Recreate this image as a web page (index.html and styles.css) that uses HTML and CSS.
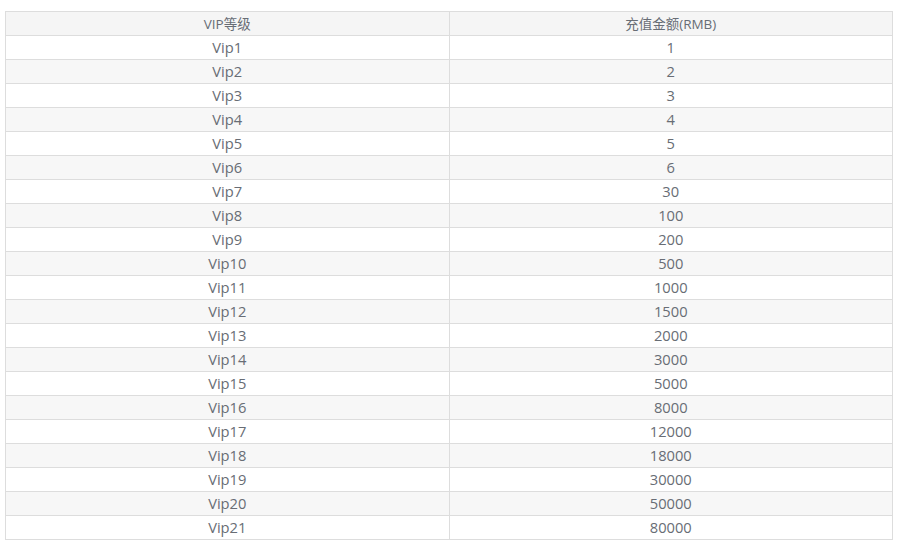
FILE: index.html
```html
<!DOCTYPE html>
<html>
<head>
<meta charset="utf-8">
<link rel="stylesheet" href="styles.css">
</head>
<body>
<div class="wrap">
<table class="vip">
<thead>
<tr><th>VIP等级</th><th>充值金额(RMB)</th></tr>
</thead>
<tbody>
<tr><td>Vip1</td><td>1</td></tr>
<tr><td>Vip2</td><td>2</td></tr>
<tr><td>Vip3</td><td>3</td></tr>
<tr><td>Vip4</td><td>4</td></tr>
<tr><td>Vip5</td><td>5</td></tr>
<tr><td>Vip6</td><td>6</td></tr>
<tr><td>Vip7</td><td>30</td></tr>
<tr><td>Vip8</td><td>100</td></tr>
<tr><td>Vip9</td><td>200</td></tr>
<tr><td>Vip10</td><td>500</td></tr>
<tr><td>Vip11</td><td>1000</td></tr>
<tr><td>Vip12</td><td>1500</td></tr>
<tr><td>Vip13</td><td>2000</td></tr>
<tr><td>Vip14</td><td>3000</td></tr>
<tr><td>Vip15</td><td>5000</td></tr>
<tr><td>Vip16</td><td>8000</td></tr>
<tr><td>Vip17</td><td>12000</td></tr>
<tr><td>Vip18</td><td>18000</td></tr>
<tr><td>Vip19</td><td>30000</td></tr>
<tr><td>Vip20</td><td>50000</td></tr>
<tr><td>Vip21</td><td>80000</td></tr>
</tbody>
</table>
</div>
</body>
</html>
```
FILE: styles.css
```css
html, body {
  margin: 0;
  padding: 0;
  background: #fff;
}
.wrap {
  padding: 11px 0 0 5px;
}
.vip {
  border-collapse: collapse;
  width: 888px;
  table-layout: fixed;
  font-family: "Open Sans", "Noto Sans CJK SC", sans-serif;
  color: #686d75;
}
.vip th, .vip td {
  border: 1px solid #ddd;
  height: 23px;
  padding: 0;
  text-align: center;
  vertical-align: middle;
  line-height: 22px;
}
.vip th {
  background: #f5f5f5;
  font-weight: normal;
  font-size: 13.5px;
}
.vip td {
  font-size: 14.7px;
  line-height: 21px;
  padding-bottom: 1px;
  height: 22px;
}
.vip tbody tr:nth-child(even) td {
  background: #f7f7f7;
}
```
